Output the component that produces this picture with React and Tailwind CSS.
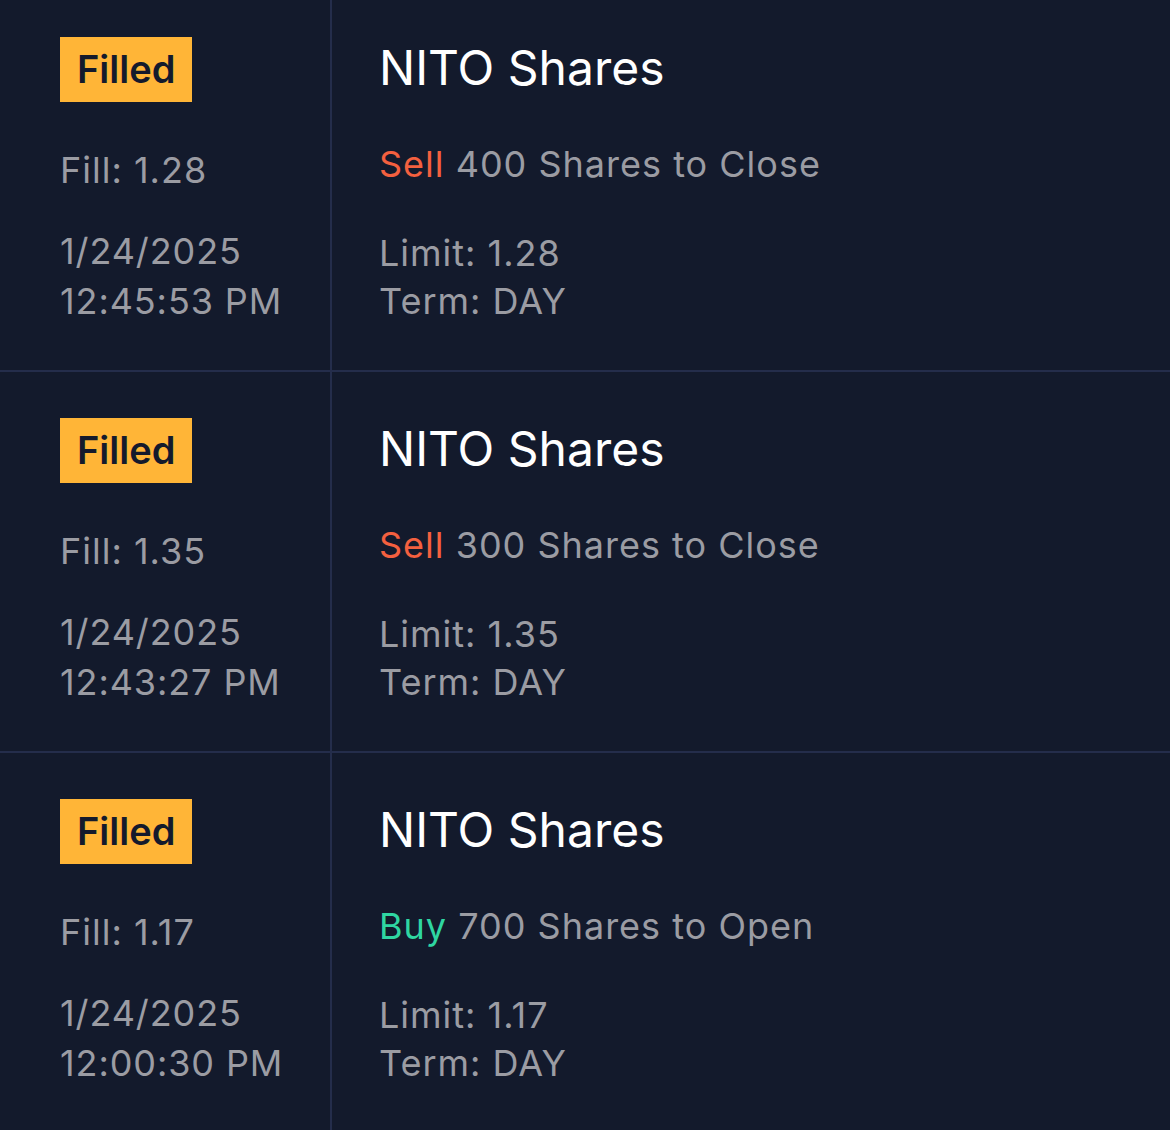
const orders = [
  { fill: '1.28', date: '1/24/2025', time: '12:45:53 PM', side: 'Sell', qty: 400, action: 'Close' },
  { fill: '1.35', date: '1/24/2025', time: '12:43:27 PM', side: 'Sell', qty: 300, action: 'Close' },
  { fill: '1.17', date: '1/24/2025', time: '12:00:30 PM', side: 'Buy', qty: 700, action: 'Open' },
]

function OrderRow({ order }) {
  return (
    <div className="flex h-[381px] border-b-2 border-[#242d4b]">
      {/* Left: status + fill */}
      <div className="w-[332px] shrink-0 border-r-2 border-[#242d4b] pl-[60px] pt-[46px]">
        <div className="inline-flex h-[65px] items-center bg-[#ffb537] px-[17px] text-[38px] font-semibold text-[#141a2c]">
          Filled
        </div>
        <div className="mt-[44px] text-[36px] leading-[48px] tracking-[1px] text-[#9b9ca3]">Fill: {order.fill}</div>
        <div className="mt-[32px] text-[36px] leading-[50px] tracking-[0.9px] text-[#9b9ca3]">
          <div>{order.date}</div>
          <div>{order.time}</div>
        </div>
      </div>

      {/* Right: order details */}
      <div className="flex-1 pl-[47px] pt-[48px]">
        <div className="text-[48px] leading-[58px] text-white">NITO Shares</div>
        <div className="mt-[43px] text-[36px] leading-[48px] tracking-[1px] text-[#9b9ca3]">
          <span className={order.side === 'Sell' ? 'text-[#f4603f]' : 'text-[#2fd6a2]'}>{order.side}</span>{' '}
          {order.qty} Shares to {order.action}
        </div>
        <div className="mt-[41px] text-[36px] leading-[48px] tracking-[1px] text-[#9b9ca3]">
          <div>Limit: {order.fill}</div>
          <div>Term: DAY</div>
        </div>
      </div>
    </div>
  )
}

export default function App() {
  return (
    <div
      className="h-[1130px] w-[1170px] overflow-hidden bg-[#131a2c]"
      style={{ fontFamily: 'Inter, "Noto Sans", sans-serif' }}
    >
      <div className="-mt-[9px]">
        {orders.map((o, i) => (
          <OrderRow key={i} order={o} />
        ))}
      </div>
    </div>
  )
}
